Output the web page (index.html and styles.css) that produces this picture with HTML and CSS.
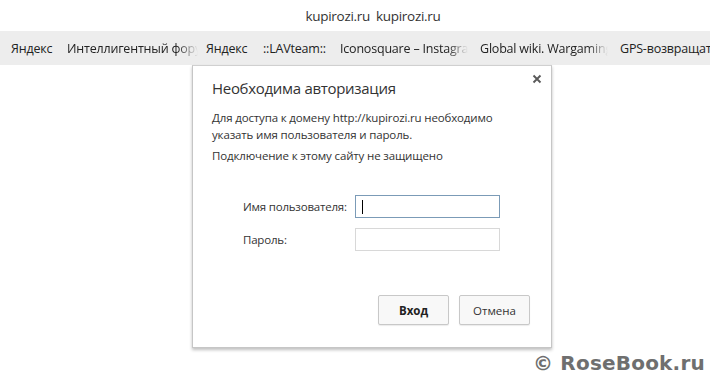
FILE: index.html
```html
<!DOCTYPE html>
<html lang="ru">
<head>
<meta charset="utf-8">
<link rel="stylesheet" href="styles.css">
</head>
<body>
<div class="titlebar"><span>kupirozi.ru</span><span>kupirozi.ru</span></div>
<div class="bookmarks">
  <span class="bm w1">Яндекс</span>
  <span class="bm w2 cut">Интеллигентный форум</span>
  <span class="bm w3">Яндекс</span>
  <span class="bm w4">::LAVteam::</span>
  <span class="bm w5 cut">Iconosquare – Instagram</span>
  <span class="bm w6 cut">Global wiki. Wargaming</span>
  <span class="bm w7">GPS-возвращатель</span>
</div>
<div class="page">
  <div class="dialog">
    <div class="close">
      <svg width="10" height="10" viewBox="0 0 10 10"><path d="M1.5 1.5 L8.5 8.5 M8.5 1.5 L1.5 8.5" stroke="#5a5a5a" stroke-width="1.9"/></svg>
    </div>
    <h1 class="title">Необходима авторизация</h1>
    <p class="msg">Для доступа к домену http://kupirozi.ru необходимо<br>указать имя пользователя и пароль.</p>
    <p class="msg note">Подключение к этому сайту не защищено</p>
    <div class="form">
      <label class="lbl">Имя пользователя:</label>
      <div class="inp focus"><span class="caret"></span></div>
      <label class="lbl">Пароль:</label>
      <div class="inp"></div>
    </div>
    <div class="actions">
      <button class="btn primary">Вход</button>
      <button class="btn">Отмена</button>
    </div>
  </div>
</div>
<div class="watermark">© RoseBook.ru</div>
</body>
</html>
```
FILE: styles.css
```css
html, body { margin: 0; padding: 0; background: #fff; }
body { width: 710px; height: 390px; overflow: hidden; position: relative; font-family: "Open Sans", "Noto Sans", sans-serif; color: #222; }

.titlebar { height: 31px; display: flex; justify-content: center; align-items: center; gap: 6px; font-size: 13.5px; color: #333; padding-left: 36px; box-sizing: border-box; letter-spacing: -0.3px; }

.bookmarks { height: 34px; background: #ededed; display: flex; align-items: center; font-size: 12.5px; color: #222; white-space: nowrap; overflow: hidden; letter-spacing: -0.2px; }
.bm { display: block; overflow: hidden; flex: none; }
.cut { -webkit-mask-image: linear-gradient(to right, #000 84%, transparent); mask-image: linear-gradient(to right, #000 84%, transparent); }
.w1 { margin-left: 11px; width: 44px; }
.w2 { margin-left: 12px; width: 131px; }
.w3 { margin-left: 8px; width: 44px; }
.w4 { margin-left: 13px; width: 64px; }
.w5 { margin-left: 13px; width: 128px; }
.w6 { margin-left: 12px; width: 128px; }
.w7 { margin-left: 12px; flex: 1; }

.page { padding-left: 192px; }
.dialog { position: relative; width: 360px; height: 283px; box-sizing: border-box; border: 1px solid #c6c6c6; border-top-color: #d0d0d0; background: #fff; box-shadow: 0 2px 3px rgba(0,0,0,0.25); padding: 11px 21px 0 19px; display: flex; flex-direction: column; }
.close { position: absolute; right: 9px; top: 8px; width: 10px; height: 10px; display: flex; }

.title { margin: 0; font-weight: normal; font-size: 15px; color: #333; line-height: 22px; letter-spacing: -0.3px; }
.msg { margin: 10px 0 0; font-size: 11.5px; line-height: 17px; color: #333; letter-spacing: -0.15px; }
.note { margin-top: 4px; }

.form { display: grid; grid-template-columns: 113px 145px; row-gap: 10px; align-items: center; margin: 31px 0 0 30px; }
.lbl { font-size: 11.5px; color: #333; letter-spacing: -0.2px; padding-left: 1px; }
.inp { height: 23px; box-sizing: border-box; border: 1px solid #d8d8d8; background: #fff; position: relative; }
.inp.focus { border-color: #7b9bb7; }
.caret { position: absolute; left: 6px; top: 4px; width: 1px; height: 14px; background: #000; }

.actions { margin-top: auto; margin-bottom: 22px; display: flex; justify-content: flex-end; gap: 10px; }
.btn { width: 71px; height: 30px; font-family: inherit; font-size: 11.5px; color: #333; background: #f8f8f8; border: 1px solid #c8c8c8; border-radius: 2px; box-shadow: 0 1px 1px rgba(0,0,0,0.08); padding: 0; }
.btn.primary { font-weight: bold; color: #222; }

.watermark { position: absolute; left: 533px; top: 351px; font-family: "DejaVu Sans", Verdana, sans-serif; font-weight: bold; font-size: 20px; color: #6f6f6f; letter-spacing: 0.2px; }
```
